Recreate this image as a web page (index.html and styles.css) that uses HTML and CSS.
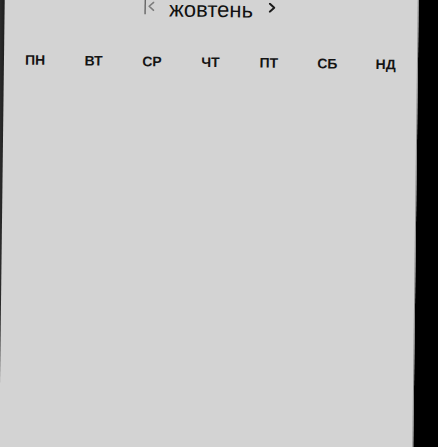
FILE: index.html
```html
<!DOCTYPE html>
<html lang="uk">
<head>
<meta charset="utf-8">
<title>Календар</title>
<link rel="stylesheet" href="styles.css">
</head>
<body>
<div class="panel">
  <div class="header">
    <span class="caret"></span>
    <svg class="chev chev-prev" width="7" height="10" viewBox="0 0 7 10"><polyline points="6,1 1.5,5 6,9" fill="none" stroke="#7c7c7c" stroke-width="1.6" stroke-linecap="round" stroke-linejoin="round"/></svg>
    <span class="month">жовтень</span>
    <svg class="chev chev-next" width="7" height="10" viewBox="0 0 7 10"><polyline points="1.2,1 5.6,5 1.2,9" fill="none" stroke="#1c1c1c" stroke-width="2" stroke-linecap="round" stroke-linejoin="round"/></svg>
  </div>
  <div class="weekdays">
    <div class="day">ПН</div>
    <div class="day">ВТ</div>
    <div class="day">СР</div>
    <div class="day">ЧТ</div>
    <div class="day">ПТ</div>
    <div class="day">СБ</div>
    <div class="day">НД</div>
  </div>
</div>
</body>
</html>
```
FILE: styles.css
```css
html, body {
  margin: 0;
  padding: 0;
  height: 100%;
  overflow: hidden;
}
body {
  background: linear-gradient(to right, #2b2b2b 0, #1a1a1a 6px, #000 14px);
  font-family: "Liberation Sans", Arial, sans-serif;
  color: #151515;
}
.panel {
  box-sizing: border-box;
  width: 414px;
  height: 490px;
  margin: -20px 0 0 2px;
  padding-top: 16px;
  background: #d3d3d3;
  border-right: 1px solid #8e8e8e;
  transform: rotate(0.7deg);
  transform-origin: 207px 243px;
}
.header {
  display: flex;
  justify-content: center;
  align-items: flex-start;
  height: 26px;
  margin-top: 1px;
  line-height: 26px;
  padding-right: 2px;
}
.caret {
  display: block;
  width: 1px;
  height: 16px;
  margin-top: 2px;
  margin-right: 2px;
  background: #3a3a3a;
}
.chev {
  display: block;
  margin-top: 5px;
}
.chev-prev {
  margin-right: 15px;
}
.chev-next {
  margin-left: 16px;
}
.month {
  font-size: 22px;
  color: #111;
}
.weekdays {
  display: grid;
  grid-template-columns: repeat(7, 1fr);
  padding: 0 2px;
  margin-top: 31px;
}
.day {
  text-align: center;
  font-size: 14px;
  font-weight: bold;
  line-height: 17px;
  color: #141414;
}
```
